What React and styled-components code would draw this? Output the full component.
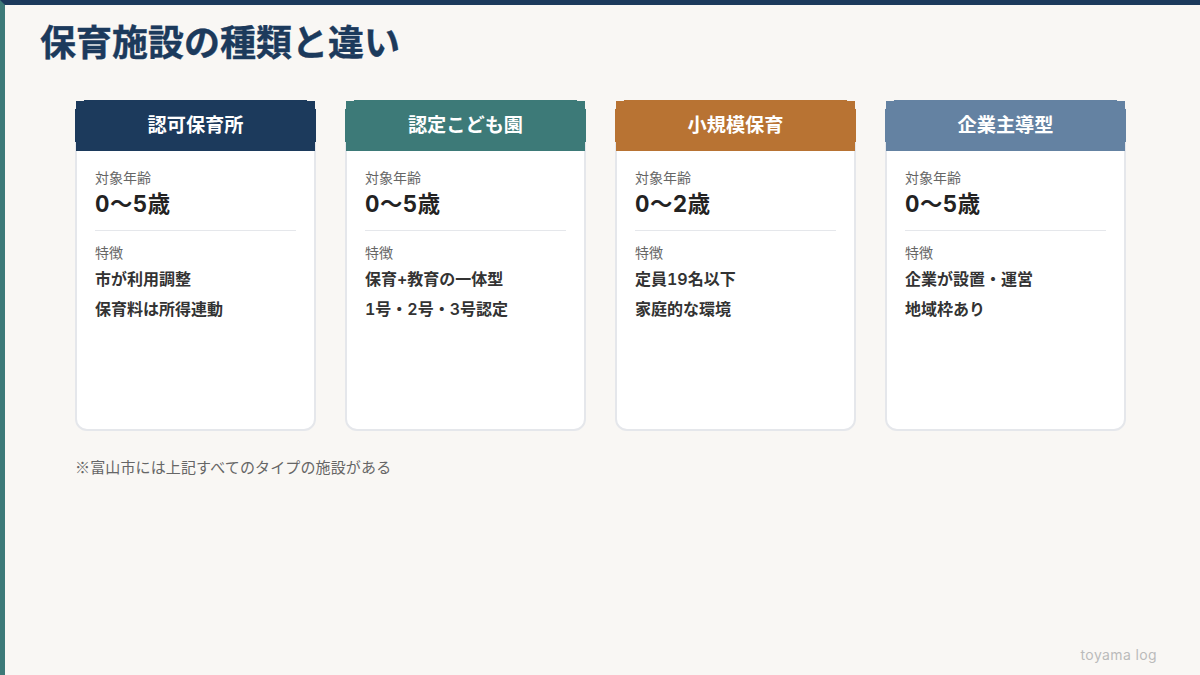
import React from "react";
import styled, { createGlobalStyle } from "styled-components";

const GlobalStyle = createGlobalStyle`
  html, body {
    margin: 0;
    padding: 0;
    background: #f9f7f4;
  }
  body {
    font-family: "Inter", "Noto Sans CJK JP", sans-serif;
    font-variant-numeric: tabular-nums;
  }
`;

const cards = [
  { name: "認可保育所", color: "#1c3a5c", age: "0〜5歳", notes: ["市が利用調整", "保育料は所得連動"] },
  { name: "認定こども園", color: "#3d7a78", age: "0〜5歳", notes: ["保育+教育の一体型", "1号・2号・3号認定"] },
  { name: "小規模保育", color: "#b87333", age: "0〜2歳", notes: ["定員19名以下", "家庭的な環境"] },
  { name: "企業主導型", color: "#6482a2", age: "0〜5歳", notes: ["企業が設置・運営", "地域枠あり"] },
];

export default function App() {
  return (
    <Slide>
      <GlobalStyle />
      <Title>保育施設の種類と違い</Title>
      <CardRow>
        {cards.map((card) => (
          <Card key={card.name}>
            <CardHeader color={card.color}>{card.name}</CardHeader>
            <CardBody>
              <Label>対象年齢</Label>
              <Age>{card.age}</Age>
              <Divider />
              <Label>特徴</Label>
              <NoteList>
                {card.notes.map((note) => (
                  <Note key={note}>{note}</Note>
                ))}
              </NoteList>
            </CardBody>
          </Card>
        ))}
      </CardRow>
      <Footnote>※富山市には上記すべてのタイプの施設がある</Footnote>
      <Brand>toyama log</Brand>
    </Slide>
  );
}

const Slide = styled.div`
  position: relative;
  width: 1200px;
  height: 675px;
  box-sizing: border-box;
  overflow: hidden;
  background: #f9f7f4;
  border-top: 5px solid #1c3a5c;
  border-left: 5px solid #3d7a78;
`;

const Title = styled.h1`
  margin: 16px 0 0 35px;
  font-size: 36px;
  line-height: 44px;
  font-weight: 700;
  color: #1c3a5c;
  -webkit-text-stroke: 0.4px #1c3a5c;
`;

const CardRow = styled.div`
  display: flex;
  gap: 29px;
  margin: 35px 0 0 70px;
`;

const Card = styled.div`
  width: 241px;
  height: 331px;
  box-sizing: border-box;
  border: 2px solid #e5e7eb;
  border-radius: 12px;
  background: #fff;
`;

const CardHeader = styled.div`
  height: 51px;
  margin: -2px -2px 0;
  clip-path: polygon(
    9px 0, calc(100% - 9px) 0, calc(100% - 9px) 1px, calc(100% - 1px) 1px,
    calc(100% - 1px) 9px, 100% 9px, 100% 42px, calc(100% - 1px) 42px,
    calc(100% - 1px) 100%, 1px 100%, 1px 42px, 0 42px, 0 9px, 1px 9px, 1px 1px, 9px 1px
  );
  background: ${(props) => props.color};
  color: #fff;
  font-size: 19.2px;
  font-weight: 700;
  line-height: 51px;
  text-align: center;
`;

const CardBody = styled.div`
  padding: 17px 18px 0;
`;

const Label = styled.div`
  font-size: 14px;
  line-height: 20px;
  color: #666;
`;

const Age = styled.div`
  padding-top: 1px;
  font-size: 22.4px;
  line-height: 30px;
  font-weight: 700;
  letter-spacing: 0.5px;
  color: #222;
`;

const Divider = styled.div`
  height: 1px;
  margin: 11px 0 12px;
  background: #e5e7eb;
`;

const NoteList = styled.div`
  margin-top: 1px;
`;

const Note = styled.div`
  font-size: 16px;
  line-height: 30px;
  font-weight: 600;
  color: #333;
`;

const Footnote = styled.div`
  margin: 26px 0 0 70px;
  font-family: "Noto Sans CJK JP", sans-serif;
  font-size: 15px;
  letter-spacing: 0.14px;
  line-height: 20px;
  color: #666;
`;

const Brand = styled.div`
  position: absolute;
  right: 43px;
  bottom: 12px;
  font-size: 14px;
  letter-spacing: 0.4px;
  color: #bbb;
`;
